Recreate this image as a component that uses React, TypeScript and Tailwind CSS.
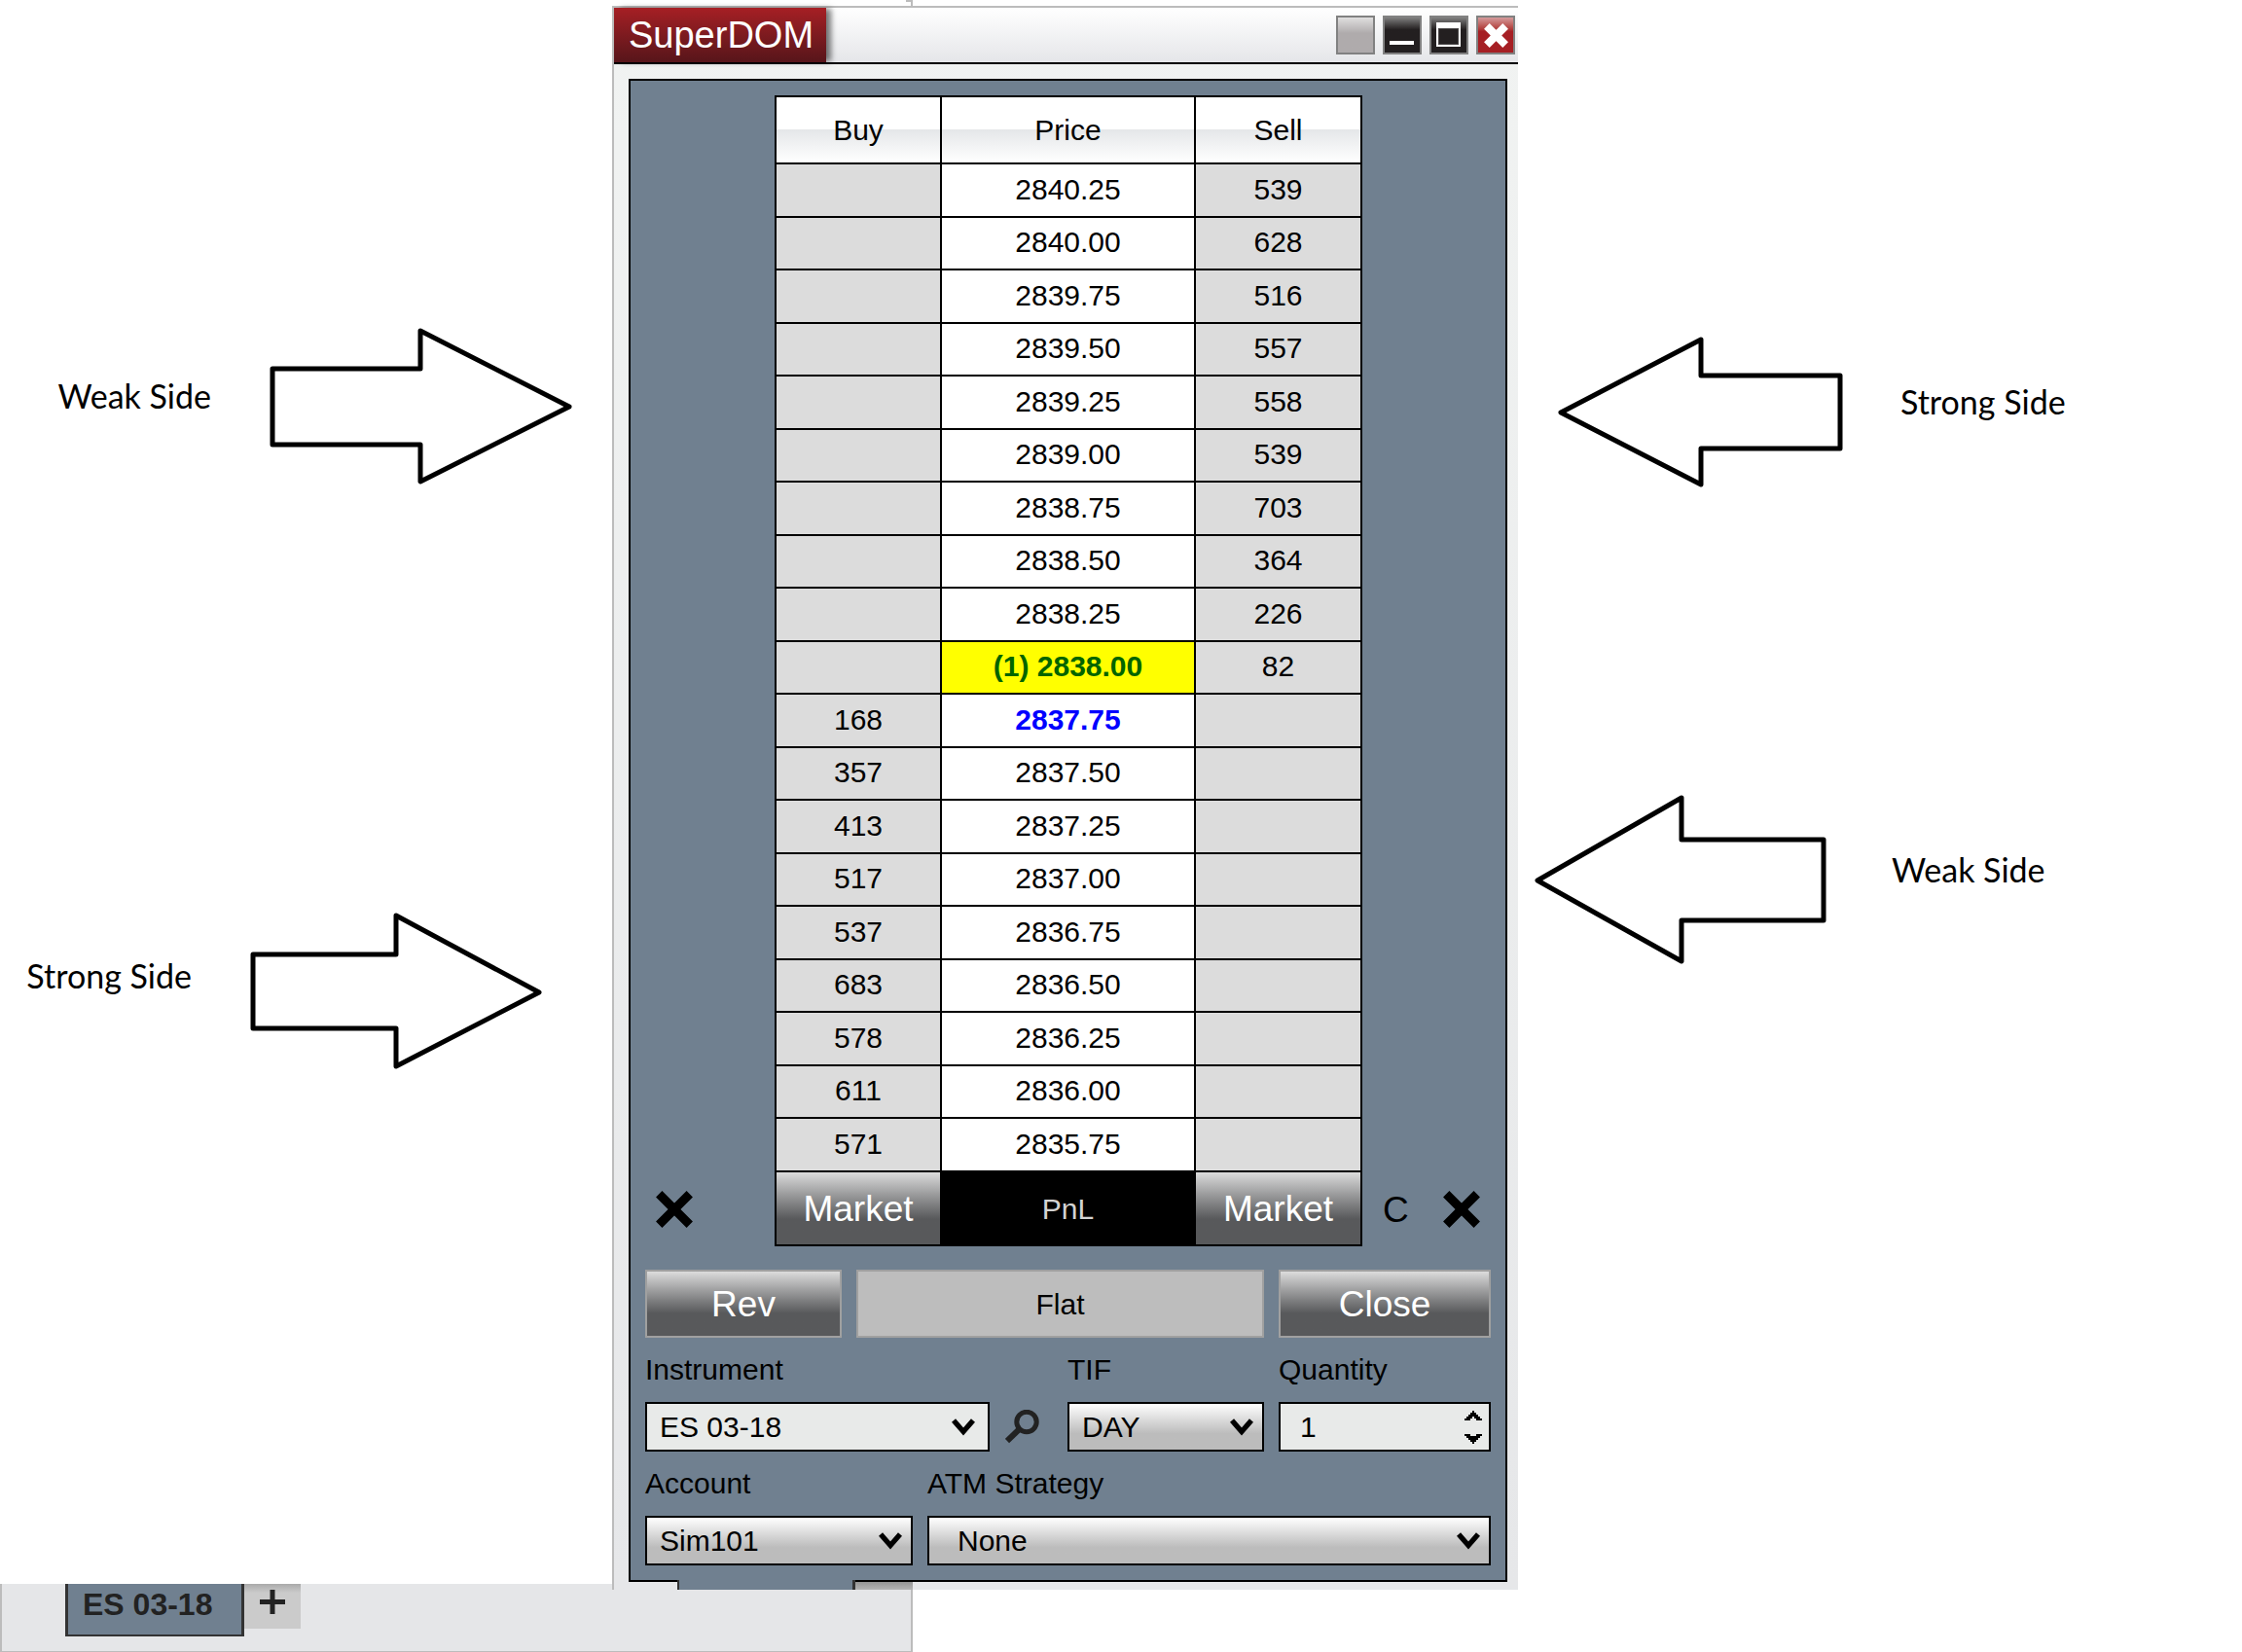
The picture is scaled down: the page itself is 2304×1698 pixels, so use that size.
import { useState, type ReactNode } from 'react';

interface Level {
  price: string;
  buy?: number;
  sell?: number;
  mark?: 'last' | 'bid';
}

const levels: Level[] = [
  { price: '2840.25', sell: 539 },
  { price: '2840.00', sell: 628 },
  { price: '2839.75', sell: 516 },
  { price: '2839.50', sell: 557 },
  { price: '2839.25', sell: 558 },
  { price: '2839.00', sell: 539 },
  { price: '2838.75', sell: 703 },
  { price: '2838.50', sell: 364 },
  { price: '2838.25', sell: 226 },
  { price: '(1) 2838.00', sell: 82, mark: 'last' },
  { price: '2837.75', buy: 168, mark: 'bid' },
  { price: '2837.50', buy: 357 },
  { price: '2837.25', buy: 413 },
  { price: '2837.00', buy: 517 },
  { price: '2836.75', buy: 537 },
  { price: '2836.50', buy: 683 },
  { price: '2836.25', buy: 578 },
  { price: '2836.00', buy: 611 },
  { price: '2835.75', buy: 571 },
];

const priceClass = {
  last: 'bg-[#ffff00] font-bold text-[#006400]',
  bid: 'bg-white font-bold text-[#0000ff]',
  none: 'bg-white',
};

const metal = 'bg-linear-to-b from-[#dcdcdc] to-[#58595b] to-65% text-[37px] leading-none text-white';
const cell = 'border-2 border-black p-0 pb-0.5';
const headCell =
  'border-2 border-black bg-[linear-gradient(#fff_50%,#e5e7e9_50%,#fff)] p-0 font-normal';
const selectClass =
  'h-[51px] w-full appearance-none rounded-none border-2 border-black pl-[13px] text-[30px] leading-none text-black';
const silver = 'bg-linear-to-b from-white to-[#bcbcbc] to-65%';
const titleButton = 'flex size-10 items-center justify-center border-2 border-[#818181]';

function Cross({ size, width, className }: { size: number; width: number; className?: string }) {
  const a = width * 0.36;
  const b = size - a;
  return (
    <svg width={size} height={size} viewBox={`0 0 ${size} ${size}`} className={className}>
      <path d={`M${a} ${a}L${b} ${b}M${b} ${a}L${a} ${b}`} stroke="currentColor" strokeWidth={width} />
    </svg>
  );
}

function Field({ id, label, children }: { id: string; label: string; children: ReactNode }) {
  return (
    <div className="min-w-0">
      <label htmlFor={id} className="block text-[30px] leading-[66px] whitespace-nowrap">
        {label}
      </label>
      {children}
    </div>
  );
}

interface SelectProps {
  id: string;
  value: string;
  className: string;
  /** flat combo style, with its arrow further in */
  combo?: boolean;
}

function Select({ id, value, className, combo }: SelectProps) {
  return (
    <div className="relative min-w-0 flex-1">
      <select id={id} defaultValue={value} className={`${selectClass} ${className}`}>
        <option>{value}</option>
      </select>
      <svg
        width="24"
        height="18"
        viewBox="0 0 24 18"
        className={`pointer-events-none absolute top-[17px] ${combo ? 'right-[15px]' : 'right-[11px]'}`}
      >
        <path d="M2 2L12 13.5L22 2" fill="none" stroke="#000" strokeWidth="5.4" />
      </svg>
    </div>
  );
}

function TitleBar() {
  return (
    <header className="flex h-[58px] items-start border-b-2 border-black bg-linear-to-b from-white to-[#e5e6e9]">
      <h1 className="h-14 bg-linear-to-b from-[#a61f24] to-[#57151a] pr-[13px] pl-[15px] text-[38px] leading-[56px] text-white shadow-[6px_0_6px_-1px_#0008]">
        SuperDOM
      </h1>
      <div className="ml-auto flex gap-2 pt-2 pr-[3px]">
        <button aria-label="Link" className={`${titleButton} bg-linear-to-b from-[#e0dfdf] to-[#afabac] to-45%`} />
        <button aria-label="Minimize" className={`${titleButton} bg-linear-to-b from-[#808080] to-[#231f20] to-35%`}>
          <svg width="36" height="36" viewBox="0 0 36 36">
            <path d="M5 24h25v4H5z" fill="#fff" />
          </svg>
        </button>
        <button aria-label="Maximize" className={`${titleButton} bg-linear-to-b from-[#808080] to-[#231f20] to-35%`}>
          <svg width="36" height="36" viewBox="0 0 36 36">
            <path d="M5 5h25v25H5z" fill="#fff" />
            <path d="M7 11h21v17H7z" fill="#4a4748" />
            <path d="M8 12h19v15H8z" fill="#231f20" />
          </svg>
        </button>
        <button
          aria-label="Close window"
          className={`${titleButton} bg-linear-to-b from-[#d49a9c] to-[#a61f24] to-40% text-white`}
        >
          <Cross size={25} width={8} />
        </button>
      </div>
    </header>
  );
}

function Ladder() {
  return (
    <table className="w-full table-fixed border-collapse text-center text-[30px] leading-none">
      <colgroup>
        <col className="w-[170px]" />
        <col />
        <col className="w-[171px]" />
      </colgroup>
      <thead>
        <tr className="h-[69px]">
          <th className={headCell}>Buy</th>
          <th className={headCell}>Price</th>
          <th className={headCell}>Sell</th>
        </tr>
      </thead>
      <tbody>
        {levels.map((l) => (
          <tr key={l.price} className="odd:h-[55px] even:h-[54px]">
            <td className={`${cell} bg-[#dcdcdc]`}>{l.buy}</td>
            <td className={`${cell} ${priceClass[l.mark ?? 'none']}`}>{l.price}</td>
            <td className={`${cell} bg-[#dcdcdc]`}>{l.sell}</td>
          </tr>
        ))}
      </tbody>
    </table>
  );
}

function Quantity() {
  const [qty, setQty] = useState('1');
  const step = (n: number) => setQty(String(Math.max(1, (Number(qty) || 0) + n)));

  return (
    <div className="flex h-[51px] border-2 border-black bg-[#e8eae9]">
      <input
        id="quantity"
        inputMode="numeric"
        value={qty}
        onChange={(e) => setQty(e.target.value)}
        className="min-w-0 flex-1 pl-5 text-[30px] leading-none outline-none"
      />
      <div className="flex flex-col justify-center gap-3 pr-[7px]">
        <button aria-label="Increase quantity" onClick={() => step(1)}>
          <svg width="18" height="11" viewBox="0 0 18 11" className="block">
            <path d="M8 0H10V2H12V4H14V6H16V8H18V10H12V8H10V6H8V8H6V10H0V8H2V6H4V4H6V2H8Z" />
          </svg>
        </button>
        <button aria-label="Decrease quantity" onClick={() => step(-1)}>
          <svg width="18" height="11" viewBox="0 0 18 11" className="block">
            <path d="M8 11H10V9H12V7H14V5H16V3H18V1H12V3H6V1H0V3H2V5H4V7H6V9H8Z" />
          </svg>
        </button>
      </div>
    </div>
  );
}

function OrderPanel() {
  return (
    <div className="px-[15px] pt-6 pb-[15px]">
      <div className="grid h-[70px] grid-cols-[202fr_419fr_218fr] gap-[15px]">
        <button className={`border-2 border-[#a0a0a0] ${metal}`}>Rev</button>
        <div className="flex items-center justify-center border-2 border-[#a0a0a0] bg-[#bdbdbd] text-[30px]">Flat</div>
        <button className={`border-2 border-[#a0a0a0] ${metal}`}>Close</button>
      </div>
      <div className="grid grid-cols-[419fr_202fr_218fr] gap-[15px]">
        <Field id="instrument" label="Instrument">
          <div className="flex">
            <Select id="instrument" value="ES 03-18" className="bg-[#e8eae9]" combo />
            <button aria-label="Search instrument" className="w-[65px] pl-4">
              <svg width="35" height="35" viewBox="0 0 35 35">
                <circle cx="22" cy="12.5" r="10.2" fill="none" stroke="#222" strokeWidth="5" />
                <path d="M15 19.5L2 32" stroke="#222" strokeWidth="6" />
              </svg>
            </button>
          </div>
        </Field>
        <Field id="tif" label="TIF">
          <Select id="tif" value="DAY" className={silver} />
        </Field>
        <Field id="quantity" label="Quantity">
          <Quantity />
        </Field>
      </div>
      <div className="grid grid-cols-[275fr_579fr] gap-[15px]">
        <Field id="account" label="Account">
          <Select id="account" value="Sim101" className={silver} />
        </Field>
        <Field id="atm" label="ATM Strategy">
          <Select id="atm" value="None" className={`${silver} indent-4`} />
        </Field>
      </div>
    </div>
  );
}

function SuperDom() {
  return (
    <section className="relative z-10 border-t-2 border-l-2 border-[#bcbcbc] bg-linear-to-b from-[#f1f3f2] to-[#e6e7e9]">
      <TitleBar />
      <div className="mt-[15px] mr-[11px] ml-[15px] border-2 border-black bg-[#708090]">
        <div className="grid grid-cols-[148fr_604fr_147fr] pt-[15px]">
          <div className="col-start-2">
            <Ladder />
          </div>
          <div className="col-start-1 flex items-center pl-[26px]">
            <button aria-label="Cancel buy orders">
              <Cross size={38} width={9} />
            </button>
          </div>
          <div className="grid h-[76px] grid-cols-[168fr_263fr_169fr] border-x-2 border-b-2 border-black">
            <button className={metal}>Market</button>
            <button className="bg-black text-[30px] text-[#d3d3d3]">PnL</button>
            <button className={metal}>Market</button>
          </div>
          <div className="flex items-center justify-between pr-[26px] pl-[21px]">
            <button aria-label="Center" className="text-[37px] leading-none">
              C
            </button>
            <button aria-label="Cancel sell orders">
              <Cross size={38} width={9} />
            </button>
          </div>
        </div>
        <OrderPanel />
      </div>
      {/* tops of the tabs, cut off by the window edge */}
      <div className="relative -mt-0.5 flex h-2.5 items-end pl-[65px]">
        <div className="h-2.5 w-[183px] border-r-[3px] border-l-2 border-[#333] bg-[#708090]" />
        <div className="h-2 w-[59px] bg-linear-to-b from-[#959595] to-[#b4b4b4]" />
      </div>
    </section>
  );
}

/** Outline arrow; the path is drawn inside a width x height box */
function Arrow({ width, height, d }: { width: number; height: number; d: string }) {
  return (
    <svg width={width} height={height} viewBox={`0 0 ${width} ${height}`} className="shrink-0">
      <path d={d} fill="#fff" stroke="#000" strokeWidth="5" strokeLinejoin="round" />
    </svg>
  );
}

const noteClass = "font-['Lato','Open_Sans',sans-serif] text-[34px] leading-10 whitespace-nowrap";

export default function App() {
  return (
    <main className="min-h-screen bg-white font-['Liberation_Sans',Arial,sans-serif] text-black">
      <div className="grid h-1.5 grid-cols-[938fr_1366fr]">
        <div className="w-[7px] justify-self-end border-t-2 border-r-2 border-[#bcbcbc]" />
      </div>

      <div className="grid grid-cols-[629fr_931fr_744fr]">
        <div className="flex flex-col gap-[440px] pt-[331px]">
          <div className="flex items-start justify-end gap-[60px] pr-[41px]">
            <p className={`pt-[50px] ${noteClass}`}>Weak Side</p>
            <Arrow width={311} height={161} d="M3 42H155V3L308 81L155 158V120H3Z" />
          </div>
          <div className="flex items-start justify-end gap-[60px] pr-[72px]">
            <p className={`pt-[45px] ${noteClass}`}>Strong Side</p>
            <Arrow width={300} height={161} d="M3 43H150V3L297 82L150 158V119H3Z" />
          </div>
        </div>

        <SuperDom />

        <div className="flex flex-col gap-[316px] pt-[340px]">
          <div className="flex items-start gap-[59px] pl-[41px]">
            <Arrow width={293} height={155} d="M290 40H147V3L3 78L147 152V115H290Z" />
            <p className={`pt-[47px] ${noteClass}`}>Strong Side</p>
          </div>
          <div className="flex items-start gap-[67px] pl-[17px]">
            <Arrow width={300} height={174} d="M297 46H151V3L3 88L151 171V129H297Z" />
            <p className={`pt-[57px] ${noteClass}`}>Weak Side</p>
          </div>
        </div>
      </div>

      <div className="-mt-1.5 grid grid-cols-[938fr_1366fr]">
        <footer className="flex h-[71px] items-start border-x-2 border-b-2 border-[#bcbcbc] bg-[#e5e6e8] pl-[65px]">
          <button className="h-[54px] border-x-[3px] border-b-2 border-[#333] bg-[#708090] pr-[30px] pb-2.5 pl-[15px] text-[32px] leading-none font-bold whitespace-nowrap text-[#222]">
            ES 03-18
          </button>
          <button
            aria-label="Add tab"
            className="flex h-[46px] w-[58px] justify-center bg-linear-to-b from-[#aaa] to-[#cbcbcb] to-20% pt-1.5"
          >
            <svg width="26" height="26" viewBox="0 0 26 26">
              <path d="M0 12.5H26M13 0V25" stroke="#222" strokeWidth="5" />
            </svg>
          </button>
        </footer>
      </div>
    </main>
  );
}
